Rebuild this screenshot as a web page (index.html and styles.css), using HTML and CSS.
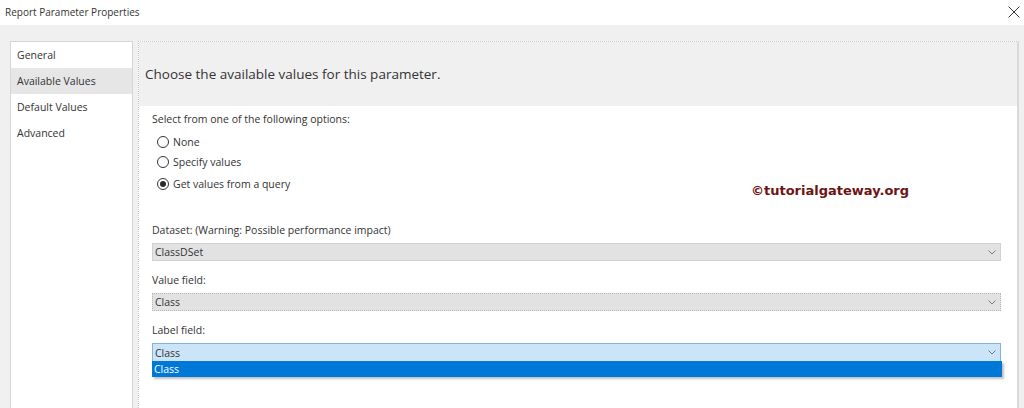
FILE: index.html
```html
<!DOCTYPE html>
<html>
<head>
    <title>Report Parameter Properties</title>
    <link rel="stylesheet" href="styles.css">
</head>
<body>
    <div class="titlebar">
        <span class="title">Report Parameter Properties</span>
        <svg class="close-icon" width="12" height="12" viewBox="0 0 12 12">
            <path d="M0.5 0.5 L11.5 11.5 M11.5 0.5 L0.5 11.5" stroke="#333" stroke-width="1" fill="none"/>
        </svg>
    </div>

    <div class="dialog">
        <div class="nav">
            <div class="nav-item">General</div>
            <div class="nav-item active">Available Values</div>
            <div class="nav-item">Default Values</div>
            <div class="nav-item">Advanced</div>
        </div>

        <div class="panel">
            <div class="panel-header">Choose the available values for this parameter.</div>
            <div class="panel-body">
                <div class="label">Select from one of the following options:</div>
                <div class="radio-list">
                    <div class="radio-row"><span class="radio"></span>None</div>
                    <div class="radio-row"><span class="radio"></span>Specify values</div>
                    <div class="radio-row checked"><span class="radio"></span>Get values from a query</div>
                </div>

                <div class="label field-label first">Dataset: (Warning: Possible performance impact)</div>
                <div class="combo">
                    <span>ClassDSet</span>
                    <svg class="chevron" width="8" height="5" viewBox="0 0 8 5"><path d="M0.5 0.5 L4 4 L7.5 0.5" stroke="#7a7a7a" fill="none"/></svg>
                </div>

                <div class="label field-label">Value field:</div>
                <div class="combo dotted">
                    <span>Class</span>
                    <svg class="chevron" width="8" height="5" viewBox="0 0 8 5"><path d="M0.5 0.5 L4 4 L7.5 0.5" stroke="#7a7a7a" fill="none"/></svg>
                </div>

                <div class="label field-label">Label field:</div>
                <div class="combo open">
                    <span>Class</span>
                    <svg class="chevron" width="8" height="5" viewBox="0 0 8 5"><path d="M0.5 0.5 L4 4 L7.5 0.5" stroke="#7a7a7a" fill="none"/></svg>
                    <div class="dropdown">
                        <div class="dropdown-item">Class</div>
                    </div>
                </div>
            </div>
            <div class="watermark">©tutorialgateway.org</div>
        </div>
    </div>
</body>
</html>
```

FILE: styles.css
```css
* {
    margin: 0;
    padding: 0;
    box-sizing: border-box;
}

body {
    font-family: 'Open Sans', 'Noto Sans', sans-serif;
    font-size: 10.5px;
    color: #262626;
    background: #f0f0f0;
    width: 1024px;
    height: 408px;
    overflow: hidden;
}

.titlebar {
    height: 25px;
    background: #ffffff;
    display: flex;
    align-items: center;
    justify-content: space-between;
    padding: 0 4px 1px 5px;
}

.title {
    font-size: 10px;
    color: #333;
}

.close-icon {
    display: block;
}

.dialog {
    display: flex;
    gap: 5px;
    padding: 16px 5px 0 10px;
    height: 383px;
}

/* Левое меню */
.nav {
    width: 123px;
    background: #ffffff;
    border: 1px solid #d6d6d6;
    border-bottom: none;
}

.nav-item {
    height: 26px;
    line-height: 26px;
    padding-left: 6px;
    color: #333;
}

.nav-item.active {
    background: #e6e6e6;
}

/* Правая панель */
.panel {
    flex: 1;
    background: #ffffff;
    border: 1px dotted #c8c8c8;
    border-right: 2px solid #d9d9d9;
    border-bottom: none;
    position: relative;
}

.panel-header {
    height: 64px;
    background: #f0f0f0;
    padding-left: 6px;
    display: flex;
    align-items: center;
    font-size: 13.5px;
    color: #333;
    padding-bottom: 1px;
}

.panel-body {
    padding: 5px 16px 0 13px;
}

.label {
    line-height: 16px;
    color: #333;
}

.radio-list {
    margin-top: 5px;
    padding-left: 5px;
}

.radio-row {
    height: 20px;
    display: flex;
    align-items: center;
    gap: 4px;
    color: #333;
}

.radio-row.checked {
    margin-top: 2px;
}

.radio {
    width: 12px;
    height: 12px;
    border: 1px solid #333;
    border-radius: 50%;
    background: #fff;
    position: relative;
}

.radio-row.checked .radio::after {
    content: '';
    position: absolute;
    left: 2px;
    top: 2px;
    width: 6px;
    height: 6px;
    border-radius: 50%;
    background: #2b2b2b;
}

.field-label {
    margin-top: 11px;
}

.field-label.first {
    margin-top: 28px;
}

.combo {
    margin-top: 5px;
    height: 18px;
    background: #e2e2e2;
    border: 1px solid #d0d0d0;
    display: flex;
    align-items: center;
    justify-content: space-between;
    padding: 0 4px 0 2px;
    color: #333;
    position: relative;
}

.combo.dotted {
    border: 1px dotted #b8b8b8;
}

.combo.open {
    height: 19px;
    background: #cce4f7;
    border-color: #7fb5e6;
}

.chevron {
    display: block;
}

.dropdown {
    position: absolute;
    top: 17px;
    left: -1px;
    right: -2px;
    background: #ffffff;
    box-shadow: 2px 2px 2px rgba(0, 0, 0, 0.25);
}

.dropdown-item {
    height: 16px;
    line-height: 16px;
    background: #0078d7;
    color: #ffffff;
    padding-left: 2px;
}

.watermark {
    position: absolute;
    left: 612px;
    top: 141px;
    font-family: 'DejaVu Sans', Verdana, sans-serif;
    font-weight: bold;
    font-size: 13px;
    color: #6d1313;
}
```
